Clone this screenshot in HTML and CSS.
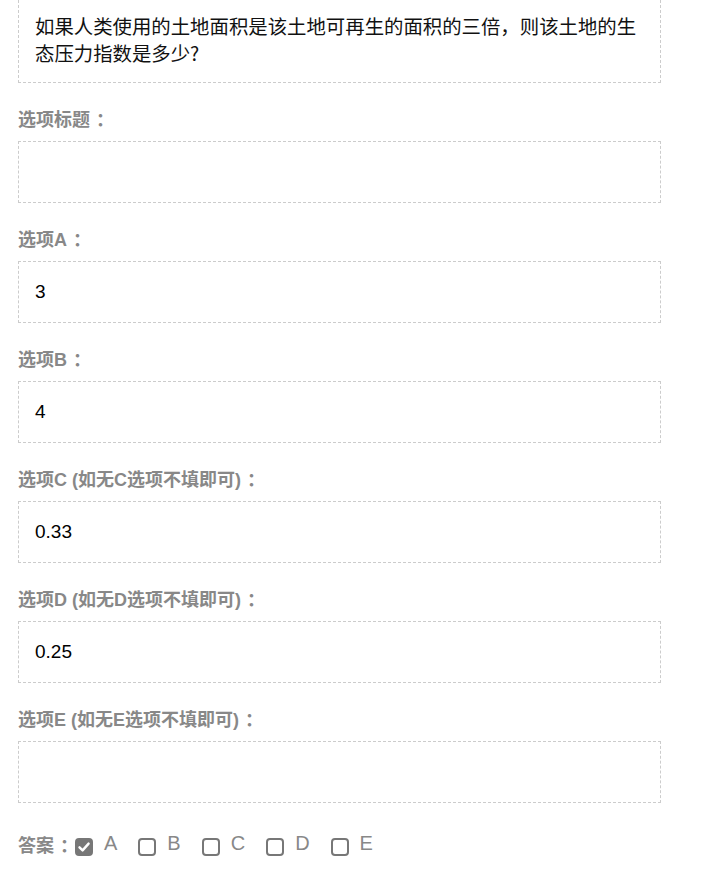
FILE: index.html
```html
<!DOCTYPE html>
<html lang="zh-CN">
<head>
<meta charset="utf-8">
<title>题目编辑</title>
<link rel="stylesheet" href="styles.css">
</head>
<body>
<div class="form">
  <div class="box box-question">如果人类使用的土地面积是该土地可再生的面积的三倍，则该土地的生态压力指数是多少?</div>

  <div class="field">
    <div class="label">选项标题<span class="colon">：</span></div>
    <div class="box"></div>
  </div>
  <div class="field">
    <div class="label">选项A<span class="colon">：</span></div>
    <div class="box value">3</div>
  </div>
  <div class="field">
    <div class="label">选项B<span class="colon">：</span></div>
    <div class="box value">4</div>
  </div>
  <div class="field">
    <div class="label">选项C (如无C选项不填即可)<span class="colon">：</span></div>
    <div class="box value">0.33</div>
  </div>
  <div class="field">
    <div class="label">选项D (如无D选项不填即可)<span class="colon">：</span></div>
    <div class="box value">0.25</div>
  </div>
  <div class="field">
    <div class="label">选项E (如无E选项不填即可)<span class="colon">：</span></div>
    <div class="box value"></div>
  </div>

  <div class="answer">
    <span class="label inline">答案<span class="colon">：</span></span>
    <span class="opt"><span class="cb checked"><svg viewBox="0 0 18 18" width="18" height="18"><path d="M4.5 9.3 L7.6 12.4 L13.6 5.6" fill="none" stroke="#fff" stroke-width="2.4" stroke-linecap="round" stroke-linejoin="round"/></svg></span><span class="letter">A</span></span>
    <span class="opt"><span class="cb"></span><span class="letter">B</span></span>
    <span class="opt"><span class="cb"></span><span class="letter">C</span></span>
    <span class="opt"><span class="cb"></span><span class="letter">D</span></span>
    <span class="opt"><span class="cb"></span><span class="letter">E</span></span>
  </div>
</div>
</body>
</html>
```
FILE: styles.css
```css
html, body {
  margin: 0;
  padding: 0;
  background: #fff;
}
body {
  font-family: "Liberation Sans", Arial, "Noto Sans CJK SC", sans-serif;
  color: #000;
}
.form {
  width: 643px;
  margin: -5px 0 0 18px;
}
.box {
  box-sizing: border-box;
  border: 1px dashed #ccc;
  height: 62px;
  padding: 0 16px;
  font-size: 19px;
  line-height: 60px;
}
.box-question {
  height: auto;
  padding: 16px;
  line-height: 27px;
  font-size: 19.4px;
  font-family: "Noto Sans CJK SC", sans-serif;
  color: #111;
}
.field {
  margin-top: 24px;
}
.label {
  font-family: "Liberation Sans", Arial, "Noto Sans CJK SC", sans-serif;
  font-weight: bold;
  font-size: 18px;
  line-height: 26px;
  height: 26px;
  color: #888;
  margin-bottom: 8px;
}
.colon {
  padding-left: 6px;
}
.label.inline {
  margin: 0;
}
.answer {
  margin-top: 30px;
  display: flex;
  align-items: center;
  height: 26px;
}
.opt {
  display: inline-flex;
  align-items: center;
  margin-right: 21px;
}
.answer .label {
  margin-right: -3px;
}
.cb {
  box-sizing: border-box;
  width: 18px;
  height: 18px;
  border: 2px solid #777;
  border-radius: 4px;
  display: inline-block;
  margin-top: 2px;
  position: relative;
}
.cb.checked {
  background: #777;
  border-color: #777;
}
.cb svg {
  position: absolute;
  left: -2px;
  top: -2px;
}
.letter {
  font-size: 20px;
  color: #888;
  margin-left: 11px;
  position: relative;
  top: -3px;
}
```
